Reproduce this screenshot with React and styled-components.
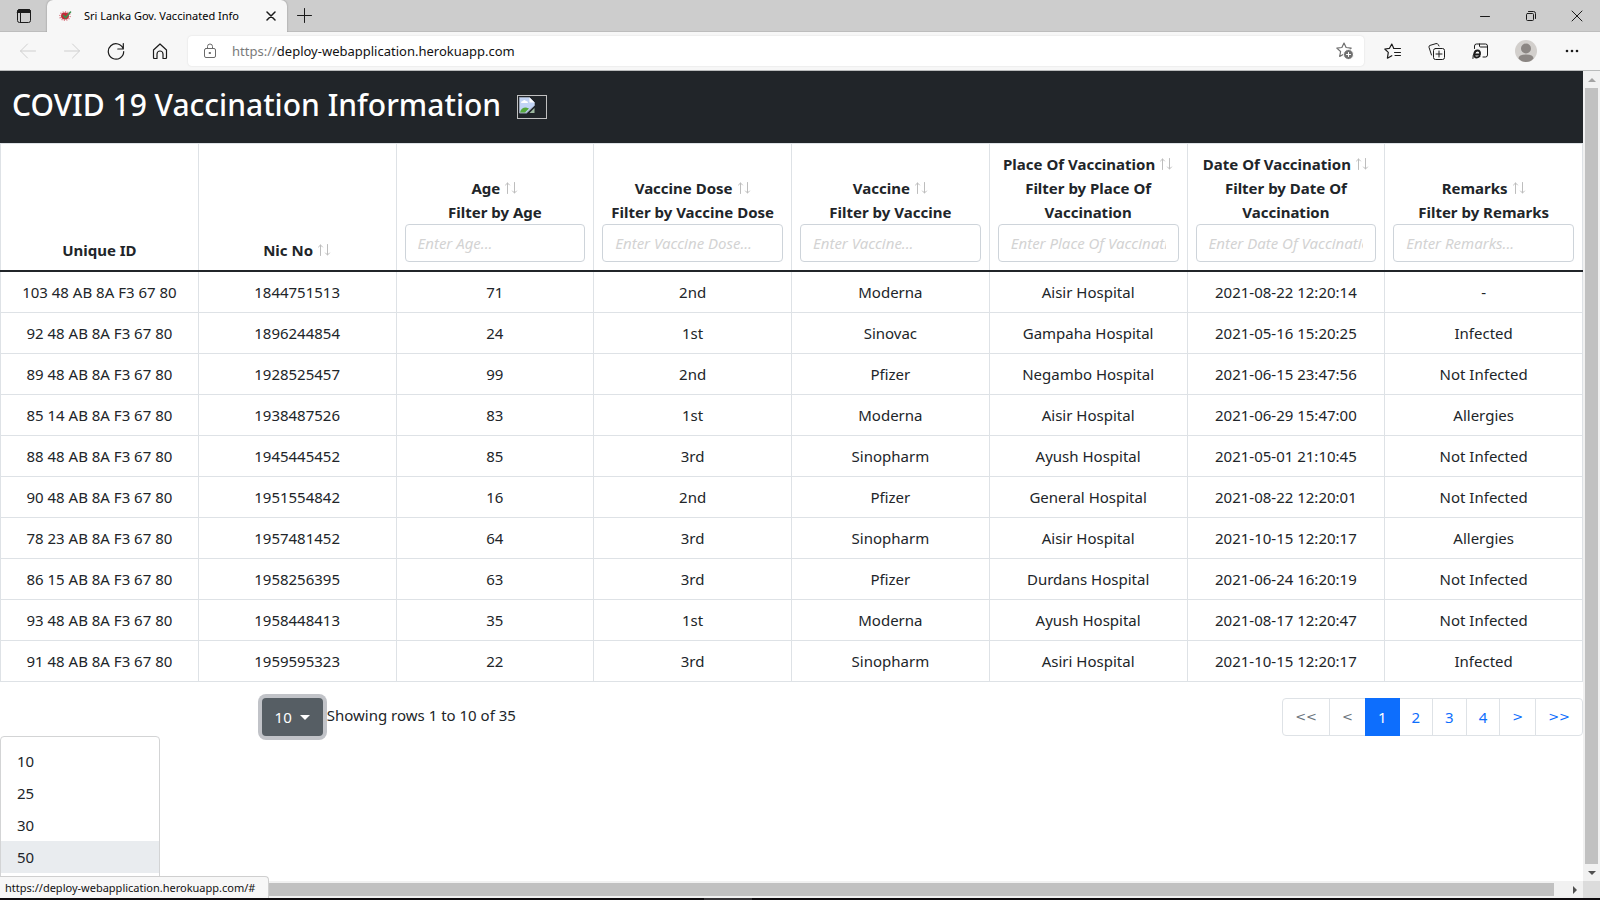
import React from "react";
import styled, { createGlobalStyle } from "styled-components";

const Global = createGlobalStyle`
  *, *::before, *::after { box-sizing: border-box; }
  html, body { margin: 0; }
  body {
    font-family: "Noto Sans", "Open Sans", sans-serif;
    font-size: 15px;
    line-height: 24px;
    color: #212529;
    background: #fff;
  }
  button, input { font: inherit; }
  button { margin: 0; padding: 0; border: 0; background: none; color: inherit; cursor: pointer; }
  svg { display: block; flex: none; }
`;

const Window = styled.div`
  display: flex;
  flex-direction: column;
  height: 100vh;
  overflow: hidden;
`;

const TabStrip = styled.div`
  display: flex;
  align-items: stretch;
  flex: none;
  height: 32px;
  background: #cdcdcd;
  border-bottom: 1px solid #bdbdbd;
  color: #000;
`;

const ChromeButton = styled.button`
  display: flex;
  align-items: center;
  justify-content: center;
  width: ${(p) => p.$width || 44}px;
  && { color: ${(p) => p.$color || "#1b1b1b"}; }
`;

const Tab = styled.div`
  display: flex;
  align-items: center;
  width: 240px;
  height: 32px;
  padding: 0 8px 0 12px;
  gap: 12px;
  background: #f7f7f7;
  border-radius: 6px 6px 0 0;
  box-shadow: 0 0 2px rgba(0, 0, 0, 0.35);
  clip-path: inset(0 -3px 0 -3px);
  font-size: 11px;
  line-height: 16px;
  white-space: nowrap;
`;

const TabTitle = styled.span`
  flex: 1;
`;

const Spacer = styled.div`
  flex: 1;
`;

const Toolbar = styled.div`
  display: flex;
  align-items: center;
  flex: none;
  height: 39px;
  padding: 0 6px;
  background: #f7f7f7;
  border-bottom: 1px solid #b9bbbb;
`;

const AddressBar = styled.div`
  display: flex;
  align-items: center;
  flex: 1;
  height: 30px;
  margin: 0 6px;
  padding: 0 8px 0 16px;
  gap: 16px;
  background: #fff;
  border-radius: 4px;
  box-shadow: 0 0 2px rgba(0, 0, 0, 0.12);
  color: #6b6b6b;
  font-size: 13px;
  line-height: 20px;
`;

const Url = styled.div`
  flex: 1;
  color: #7a7a7a;

  b { font-weight: 400; color: #111; }
`;

const Viewport = styled.div`
  display: grid;
  grid-template-columns: minmax(0, 1fr) 17px;
  grid-template-rows: minmax(0, 1fr) 17px;
  flex: 1;
  min-height: 0;
  position: relative;
`;

const Page = styled.main`
  overflow: hidden;
  background: #fff;
`;

const Banner = styled.header`
  display: flex;
  align-items: flex-start;
  gap: 16px;
  height: 72px;
  padding: 14px 12px;
  background: #212529;
  color: #fff;
`;

const Title = styled.h1`
  margin: 0;
  font-size: 30px;
  line-height: 40px;
  font-weight: 550;
`;

const BrokenImage = styled.svg`
  margin-top: 10px;
`;

const DataTable = styled.table`
  width: 100%;
  table-layout: fixed;
  border-collapse: collapse;
  text-align: center;
`;

const HeadCell = styled.th`
  padding: 8px;
  border: 1px solid #dee2e6;
  border-bottom: 2px solid #212529;
  vertical-align: bottom;
  font-weight: 700;
`;

const Cell = styled.td`
  padding: 8px;
  border: 1px solid #dee2e6;
`;

const ColumnName = styled.div`
  display: flex;
  align-items: center;
  justify-content: center;
  gap: 4px;
  white-space: nowrap;
`;

const FilterLabel = styled.label`
  display: block;
`;

const FilterInput = styled.input`
  display: block;
  width: 100%;
  height: 38px;
  padding: 6px 12px;
  border: 1px solid #ced4da;
  border-radius: 4px;
  background: #fff;
  font-weight: 400;

  &::placeholder { color: #d3d3d3; font-style: italic; opacity: 1; }
`;

const Footer = styled.div`
  display: flex;
  justify-content: space-between;
  padding-top: 16px;
`;

const SizeArea = styled.div`
  display: flex;
  justify-content: center;
  width: 50%;
  padding-right: 14px;
  gap: 4px;
`;

const SizeButton = styled.button`
  display: flex;
  align-items: center;
  gap: 8px;
  height: 38px;
  padding: 0 13px;
  border-radius: 4px;
  background: #565e64;
  box-shadow: 0 0 0 4px #c1c3c8;
  && { color: #fff; }
`;

const RowsInfo = styled.span`
  padding-top: 5px;
`;

const Pager = styled.nav`
  display: flex;
`;

const PageLink = styled.a`
  height: 38px;
  margin-left: -1px;
  padding: 6px 12px;
  border: 1px solid ${(p) => (p.$active ? "#0d6efd" : "#dee2e6")};
  background: ${(p) => (p.$active ? "#0d6efd" : "#fff")};
  color: ${(p) => (p.$active ? "#fff" : p.$muted ? "#6c757d" : "#0d6efd")};
  font-family: ${(p) => (p.$symbol ? '"DejaVu Sans", sans-serif' : "inherit")};
  font-size: ${(p) => (p.$symbol ? 13 : 15)}px;
  text-decoration: none;
  position: relative;
  z-index: ${(p) => (p.$active ? 1 : 0)};

  &:first-child { border-radius: 4px 0 0 4px; }
  &:last-child { border-radius: 0 4px 4px 0; }
`;

const Menu = styled.div`
  width: 160px;
  padding: 8px 0;
  border: 1px solid #d3d4d5;
  border-radius: 4px;
  background: #fff;
`;

const MenuItem = styled.a`
  display: block;
  padding: 4px 16px;
  background: ${(p) => (p.$hover ? "#e9ecef" : "transparent")};
  color: #212529;
  text-decoration: none;
`;

const ScrollBar = styled.div`
  display: flex;
  flex-direction: ${(p) => (p.$vertical ? "column" : "row")};
  padding: ${(p) => (p.$vertical ? "0 2px" : "2px 0")};
  background: #f1f1f1;
`;

const ScrollArrow = styled.button`
  display: flex;
  flex: none;
  align-items: center;
  justify-content: center;
  width: ${(p) => (p.$vertical ? 13 : 17)}px;
  height: ${(p) => (p.$vertical ? 17 : 13)}px;
`;

const Thumb = styled.div`
  flex: 1;
  margin-right: ${(p) => (p.$gap ? 12 : 0)}px;
  background: #c1c1c1;
`;

const Corner = styled.div`
  background: #dcdcdc;
`;

const StatusBubble = styled.div`
  position: absolute;
  left: 0;
  bottom: 0;
  width: 269px;
  height: 22px;
  padding: 2px 5px;
  background: #f7f7f7;
  border-top: 1px solid #cfcfcf;
  border-right: 1px solid #cfcfcf;
  border-radius: 0 4px 0 0;
  color: #111;
  font-size: 11px;
  line-height: 18px;
  white-space: nowrap;
`;

const TaskbarEdge = styled.div`
  display: flex;
  flex: none;
  height: 2px;
  padding-left: 44%;
  background: #0e0b0e;

  &::before { content: ""; width: 48px; background: #343235; }
`;

const Icon = ({ size = 16, width, height, children, ...rest }) => (
  <svg
    width={width || size}
    height={height || size}
    viewBox={`0 0 ${width || size} ${height || size}`}
    fill="none"
    stroke="currentColor"
    strokeLinecap="round"
    strokeLinejoin="round"
    aria-hidden="true"
    {...rest}
  >
    {children}
  </svg>
);

const TabMenuIcon = () => (
  <Icon>
    <rect x="1.5" y="1.5" width="13" height="13" rx="2" />
    <path d="M1.5 3.5a2 2 0 0 1 2-2h9a2 2 0 0 1 2 2v1h-13z" fill="currentColor" />
    <path d="M4.5 4.5v10" />
  </Icon>
);

const VirusIcon = () => (
  <Icon width={13} height={12}>
    <ellipse cx="6" cy="6" rx="5.2" ry="4.2" stroke="#dd8e96" strokeWidth="1.6" strokeDasharray="1.2 1.2" strokeLinecap="butt" />
    <ellipse cx="6" cy="6" rx="4" ry="3.4" fill="#c22a36" stroke="none" />
    <path d="M4.5 5.5l2 2.3L11.5 2" stroke="#3d8f4e" strokeWidth="1.6" />
  </Icon>
);

const CloseIcon = ({ size = 10, strokeWidth = 1 }) => (
  <Icon size={size} strokeWidth={strokeWidth}>
    <path d={`M1 1L${size - 1} ${size - 1}M${size - 1} 1L1 ${size - 1}`} />
  </Icon>
);

const PlusIcon = () => (
  <Icon size={15}><path d="M7.5 .5v14M.5 7.5h14" /></Icon>
);

const ArrowIcon = ({ right }) => (
  <Icon>
    <path d={right ? "M.5 8h15M8.5 1l7 7-7 7" : "M15.5 8H.5M7.5 1l-7 7 7 7"} />
  </Icon>
);

const ReloadIcon = () => (
  <Icon size={18} strokeWidth="1.2">
    <path d="M16.3 7A7.7 7.7 0 1 0 16.7 9.5M16.3 1.5V7h-5.5" />
  </Icon>
);

const HomeIcon = () => (
  <Icon strokeWidth="1.2">
    <path d="M1.5 7L8 1l6.5 6v7.5q0 1-1 1H11V11a3 3 0 0 0-6 0v4.5H2.5q-1 0-1-1z" />
  </Icon>
);

const LockIcon = () => (
  <Icon width={12} height={16}>
    <rect x=".5" y="5.5" width="11" height="9" rx="1.5" />
    <path d="M3.5 5.5v-2a2.5 2.5 0 0 1 5 0v2" />
    <rect x="5.5" y="9.5" width="1" height="1" fill="currentColor" />
  </Icon>
);

const StarAddIcon = () => (
  <Icon size={18}>
    <path d="M8 1l2.1 4.5 5.1.6-3.8 3.4.9 4.9L8 12l-4.3 2.4.9-4.9L.8 6.1l5.1-.6z" strokeWidth="1.2" />
    <circle cx="12.5" cy="12.5" r="5" fill="#707070" stroke="#fff" />
    <path d="M12.5 10.5v4M10.5 12.5h4" stroke="#fff" />
  </Icon>
);

const FavoritesIcon = () => (
  <Icon size={17}>
    <path d="M10.5 5.5L9.8 5.4 7.8 1 5.5 5.3.8 6l3.5 3.4-.9 5.8 4.4-2.5" strokeWidth="1.2" />
    <path d="M10 5.5h6.5M10.5 9.5h6M11 12.5h5.5" />
  </Icon>
);

const CollectionsIcon = () => (
  <Icon size={17}>
    <path d="M3.5 12L1 4.3q-.4-1.4 1-1.9l6-1.8q1.6-.4 2.2 1L11 3" />
    <rect x="5.5" y="5.5" width="11" height="11" rx="2" />
    <path d="M11 8v6M8 11h6" />
  </Icon>
);

const IeModeIcon = () => (
  <Icon size={16}>
    <path d="M2.5 5.5V3a2 2 0 0 1 2-2h9a2 2 0 0 1 2 2v9a2 2 0 0 1-2 2H11M7.5 1v2q0 1 1 1h7" />
    <path d="M2.5 11.5H8q.5-4-2.500-4-2.800 0-3.300 3.500-.3 3.500 2.600 3.500 1.900 0 2.900-1.400" strokeWidth="1.8" />
    <path d="M.8 15.5q-.8-3 3-7" />
  </Icon>
);

const Avatar = () => (
  <Icon size={22} stroke="none">
    <circle cx="11" cy="11" r="11" fill="#d2cfcc" />
    <circle cx="11" cy="8.5" r="5" fill="#8b8683" />
    <path d="M3.5 18.5q0-4 7.5-4t7.5 4Q15.500 22 11 22t-7.5-3.500" fill="#8b8683" />
  </Icon>
);

const MoreIcon = () => (
  <Icon width={14} height={4} stroke="none" fill="currentColor">
    <circle cx="2" cy="2" r="1.3" /><circle cx="7" cy="2" r="1.3" /><circle cx="12" cy="2" r="1.3" />
  </Icon>
);

const MinimizeIcon = () => <Icon size={10}><path d="M.5 5.5h9" /></Icon>;

const RestoreIcon = () => (
  <Icon size={10}>
    <rect x=".5" y="2.5" width="7" height="7" rx="1" />
    <path d="M2.5.5h5a2 2 0 0 1 2 2v5" />
  </Icon>
);

const Triangle = ({ d, color, width, height }) => (
  <Icon width={width} height={height} stroke="none"><path d={d} fill={color} /></Icon>
);

const SortArrows = () => (
  <Icon width={14} height={12} stroke="#bdbdbd">
    <path d="M3.5 11.5V1M1.5 3l2-2 2 2M10.5.5V11M8.5 9l2 2 2-2" />
  </Icon>
);

const columns = [
  { name: "Unique ID" },
  { name: "Nic No", sort: true },
  { name: "Age", sort: true, filter: true },
  { name: "Vaccine Dose", sort: true, filter: true },
  { name: "Vaccine", sort: true, filter: true },
  { name: "Place Of Vaccination", sort: true, filter: true },
  { name: "Date Of Vaccination", sort: true, filter: true },
  { name: "Remarks", sort: true, filter: true },
];

const rows = [
  ["103 48 AB 8A F3 67 80", "1844751513", "71", "2nd", "Moderna", "Aisir Hospital", "2021-08-22 12:20:14", "-"],
  ["92 48 AB 8A F3 67 80", "1896244854", "24", "1st", "Sinovac", "Gampaha Hospital", "2021-05-16 15:20:25", "Infected"],
  ["89 48 AB 8A F3 67 80", "1928525457", "99", "2nd", "Pfizer", "Negambo Hospital", "2021-06-15 23:47:56", "Not Infected"],
  ["85 14 AB 8A F3 67 80", "1938487526", "83", "1st", "Moderna", "Aisir Hospital", "2021-06-29 15:47:00", "Allergies"],
  ["88 48 AB 8A F3 67 80", "1945445452", "85", "3rd", "Sinopharm", "Ayush Hospital", "2021-05-01 21:10:45", "Not Infected"],
  ["90 48 AB 8A F3 67 80", "1951554842", "16", "2nd", "Pfizer", "General Hospital", "2021-08-22 12:20:01", "Not Infected"],
  ["78 23 AB 8A F3 67 80", "1957481452", "64", "3rd", "Sinopharm", "Aisir Hospital", "2021-10-15 12:20:17", "Allergies"],
  ["86 15 AB 8A F3 67 80", "1958256395", "63", "3rd", "Pfizer", "Durdans Hospital", "2021-06-24 16:20:19", "Not Infected"],
  ["93 48 AB 8A F3 67 80", "1958448413", "35", "1st", "Moderna", "Ayush Hospital", "2021-08-17 12:20:47", "Not Infected"],
  ["91 48 AB 8A F3 67 80", "1959595323", "22", "3rd", "Sinopharm", "Asiri Hospital", "2021-10-15 12:20:17", "Infected"],
];

const pages = ["<<", "<", "1", "2", "3", "4", ">", ">>"];
const sizes = ["10", "25", "30", "50"];

export default function App() {
  return (
    <Window>
      <Global />
      <TabStrip>
        <ChromeButton $width={47} aria-label="Tab actions"><TabMenuIcon /></ChromeButton>
        <Tab>
          <VirusIcon />
          <TabTitle>Sri Lanka Gov. Vaccinated Info</TabTitle>
          <ChromeButton $width={16} aria-label="Close tab"><CloseIcon strokeWidth={1.5} /></ChromeButton>
        </Tab>
        <ChromeButton $width={34} aria-label="New tab"><PlusIcon /></ChromeButton>
        <Spacer />
        <ChromeButton $width={46} aria-label="Minimize"><MinimizeIcon /></ChromeButton>
        <ChromeButton $width={46} aria-label="Restore"><RestoreIcon /></ChromeButton>
        <ChromeButton $width={46} aria-label="Close"><CloseIcon size={12} /></ChromeButton>
      </TabStrip>

      <Toolbar>
        <ChromeButton $color="#cfcfcf" aria-label="Back"><ArrowIcon /></ChromeButton>
        <ChromeButton $color="#cfcfcf" aria-label="Forward"><ArrowIcon right /></ChromeButton>
        <ChromeButton aria-label="Reload"><ReloadIcon /></ChromeButton>
        <ChromeButton aria-label="Home"><HomeIcon /></ChromeButton>
        <AddressBar>
          <LockIcon />
          <Url>https://<b>deploy-webapplication.herokuapp.com</b></Url>
          <ChromeButton $width={22} $color="#707070" aria-label="Add to favorites"><StarAddIcon /></ChromeButton>
        </AddressBar>
        <ChromeButton aria-label="Favorites"><FavoritesIcon /></ChromeButton>
        <ChromeButton aria-label="Collections"><CollectionsIcon /></ChromeButton>
        <ChromeButton aria-label="Internet Explorer mode"><IeModeIcon /></ChromeButton>
        <ChromeButton $width={48} aria-label="Profile"><Avatar /></ChromeButton>
        <ChromeButton aria-label="More"><MoreIcon /></ChromeButton>
      </Toolbar>

      <Viewport>
        <Page>
          <Banner>
            <Title>COVID 19 Vaccination Information</Title>
            <BrokenImage width="30" height="24" viewBox="0 0 30 24" role="img" aria-label="Logo">
              <rect x=".5" y=".5" width="29" height="23" fill="none" stroke="#c0c0c0" />
              <path d="M2.5 2.5h10l5 5v3l-8 7.5h-7z" fill="#c2d4f5" stroke="#98a3b5" />
              <path d="M12.5 2.5v5h5z" fill="#fff" />
              <path d="M4 8q0-2 2-2 1-2 3 0 2 0 2 2z" fill="#fff" />
              <path d="M3 17.5q1-5 6-5l3 1-4 4z" fill="#55a83a" />
              <path d="M17.5 13v5h-5z" fill="#9db9a0" />
            </BrokenImage>
          </Banner>

          <DataTable>
            <thead>
              <tr>
                {columns.map((c, i) => (
                  <HeadCell key={c.name} scope="col">
                    <ColumnName>
                      {c.name}
                      {c.sort && <SortArrows />}
                    </ColumnName>
                    {c.filter && (
                      <>
                        <FilterLabel htmlFor={`filter-${i}`}>{`Filter by ${c.name}`}</FilterLabel>
                        <FilterInput id={`filter-${i}`} type="text" placeholder={`Enter ${c.name}...`} />
                      </>
                    )}
                  </HeadCell>
                ))}
              </tr>
            </thead>
            <tbody>
              {rows.map((r) => (
                <tr key={r[1]}>
                  {r.map((v, i) => <Cell key={i}>{v}</Cell>)}
                </tr>
              ))}
            </tbody>
          </DataTable>

          <Footer>
            <SizeArea>
              <SizeButton aria-expanded="true">
                10
                <Triangle width={10} height={5} d="M0 0h10L5 5z" color="#fff" />
              </SizeButton>
              <RowsInfo>Showing rows 1 to 10 of 35</RowsInfo>
            </SizeArea>
            <Pager aria-label="Pages">
              {pages.map((p) => (
                <PageLink
                  key={p}
                  href="#"
                  $active={p === "1"}
                  $muted={p.startsWith("<")}
                  $symbol={/[<>]/.test(p)}
                >
                  {p}
                </PageLink>
              ))}
            </Pager>
          </Footer>
          <Menu>
            {sizes.map((s) => (
              <MenuItem key={s} href="#" $hover={s === "50"}>{s}</MenuItem>
            ))}
          </Menu>
        </Page>

        <ScrollBar $vertical>
          <ScrollArrow $vertical aria-label="Scroll up"><Triangle width={8} height={4} d="M0 4h8L4 0z" color="#a3a3a3" /></ScrollArrow>
          <Thumb />
          <ScrollArrow $vertical aria-label="Scroll down"><Triangle width={8} height={4} d="M0 0h8L4 4z" color="#505050" /></ScrollArrow>
        </ScrollBar>
        <ScrollBar>
          <ScrollArrow aria-label="Scroll left"><Triangle width={4} height={8} d="M4 0v8L0 4z" color="#a3a3a3" /></ScrollArrow>
          <Thumb $gap />
          <ScrollArrow aria-label="Scroll right"><Triangle width={4} height={8} d="M0 0v8l4-4z" color="#505050" /></ScrollArrow>
        </ScrollBar>
        <Corner />
        <StatusBubble>https://deploy-webapplication.herokuapp.com/#</StatusBubble>
      </Viewport>
      <TaskbarEdge />
    </Window>
  );
}
